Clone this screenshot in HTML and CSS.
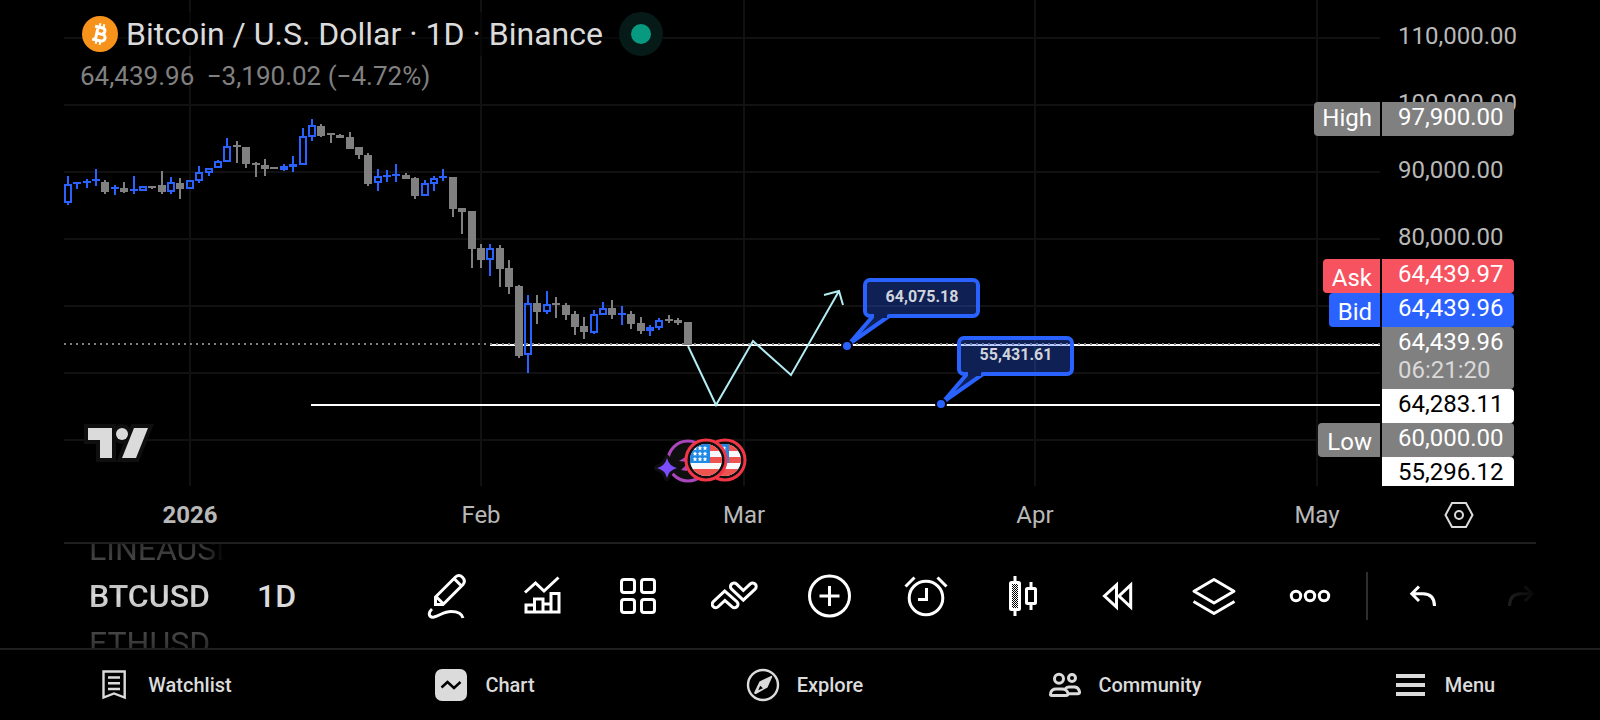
FILE: index.html
```html
<!DOCTYPE html>
<html lang="en">
  <head>
    <meta charset="utf-8">
    <meta name="viewport" content="width=device-width, initial-scale=1">
    <title>BTCUSD Chart</title>
    <link rel="stylesheet" href="styles.css">
  </head>
  <body>
    <main>
      <section class="chart">
        <div class="plot">
          <svg class="canvas" viewBox="64 0 1316 486" preserveAspectRatio="xMinYMin slice">
            <path class="grid" d="M64 38H1380M64 105H1380M64 172H1380M64 239H1380M64 306H1380M64 373H1380M64 440H1380M190 0V486M481 0V486M744 0V486M1035 0V486M1317 0V486"/>
            <path class="level" d="M490 345H1380M311 405H1380"/>
            <g id="candles"></g>
            <path class="last-price" d="M64 344H1380"/>

            <path class="projection" d="M688 346L716 405L753 341L791 375L839 291M824 295L839 291L843 305"/>

            <!-- price notes -->
            <g class="note">
              <path d="M870 280H973A5 5 0 0 1 978 285V311A5 5 0 0 1 973 316H889L849 344L873 316H870A5 5 0 0 1 865 311V285A5 5 0 0 1 870 280Z"/>
              <path class="note-edge" d="M874 316H887"/>
              <circle cx="847" cy="346" r="5"/>
              <text x="922" y="302">64,075.18</text>
            </g>
            <g class="note">
              <path d="M964 338H1067A5 5 0 0 1 1072 343V369A5 5 0 0 1 1067 374H983L943 402L967 374H964A5 5 0 0 1 959 369V343A5 5 0 0 1 964 338Z"/>
              <path class="note-edge" d="M968 374H981"/>
              <circle cx="941" cy="404" r="5"/>
              <text x="1016" y="360">55,431.61</text>
            </g>

            <!-- TradingView mark -->
            <g class="mark">
              <path d="M88 428H112V458H100V440H88ZM134 428H148L136 458H122Z"/>
              <circle cx="122" cy="434" r="6"/>
            </g>
            <g class="mark-fill">
              <path d="M88 428H112V458H100V440H88ZM134 428H148L136 458H122Z"/>
              <circle cx="122" cy="434" r="6"/>
            </g>

            <!-- events -->
            <defs>
              <clipPath id="flag-clip"><circle r="16"/></clipPath>
              <g id="flag">
                <circle r="20" fill="#0f0f0f" stroke="#f23645" stroke-width="3"/>
                <g clip-path="url(#flag-clip)">
                  <path fill="#f8f9fd" d="M-16-16H16V16H-16Z"/>
                  <path fill="#ef5350" d="M-16-16H16V-9H-16ZM-16-3H16V3H-16ZM-16 9H16V16H-16Z"/>
                  <path fill="#1e88e5" d="M-16-16H4V3H-16Z"/>
                  <path class="stars" d="M-11-14.200l.7 1.500 1.600.2-1.200 1.100.3 1.600-1.400-.8-1.400.8.3-1.600-1.200-1.100 1.600-.2zM-6-14.200l.7 1.500 1.600.2-1.200 1.100.3 1.600-1.400-.8-1.400.8.3-1.600-1.200-1.100 1.600-.2zM-1-14.200l.7 1.500 1.600.2-1.200 1.100.3 1.600-1.400-.8-1.400.8.3-1.600-1.200-1.100 1.600-.2zM-11-8.700l.7 1.500 1.600.2-1.200 1.100.3 1.600-1.400-.8-1.400.8.3-1.600-1.200-1.100 1.600-.2zM-6-8.700l.7 1.500 1.600.2-1.200 1.100.3 1.600-1.400-.8-1.400.8.3-1.600-1.200-1.100 1.600-.2zM-1-8.700l.7 1.500 1.600.2-1.200 1.100.3 1.600-1.400-.8-1.400.8.3-1.600-1.200-1.100 1.600-.2zM-11-3.200l.7 1.500 1.600.2-1.200 1.100.3 1.600-1.400-.8-1.400.8.3-1.600-1.200-1.100 1.600-.2zM-6-3.200l.7 1.500 1.600.2-1.200 1.100.3 1.600-1.400-.8-1.400.8.3-1.600-1.200-1.100 1.600-.2zM-1-3.200l.7 1.500 1.600.2-1.200 1.100.3 1.600-1.400-.8-1.400.8.3-1.600-1.200-1.100 1.600-.2z"/>
                </g>
              </g>
            </defs>
            <circle cx="688" cy="461" r="20" fill="#0f0f0f" stroke="#ab47bc" stroke-width="3"/>
            <path fill="#ab47bc" d="M679 461L687 456V462ZM681 470L687 464V471Z"/>
            <path fill="#7c4dff" stroke="#0f0f0f" stroke-width="6" paint-order="stroke" stroke-linejoin="round" d="M667 458Q669 466 677 468Q669 470 667 478Q665 470 657 468Q665 466 667 458Z"/>
            <use href="#flag" x="725" y="460"/>
            <use href="#flag" x="706" y="460"/>
          </svg>

          <header class="legend">
            <h1>
              <svg class="coin" viewBox="0 0 36 36">
                <circle cx="18" cy="18" r="18" fill="#f7931a"/>
                <g fill="none" stroke="#fff" stroke-width="3" transform="rotate(13 18 18)">
                  <path d="M11.500 11.500H19.500A3.200 3.200 0 0 1 19.500 17.800H15M19.500 17.800H20.500A3.400 3.400 0 0 1 20.500 24.600H11.500M14.700 11.500V24.500"/>
                  <path stroke-width="2" d="M16 7.500V11M20 7.500V11M16 25V28.500M20 25V28.500"/>
                </g>
              </svg>
              Bitcoin / U.S. Dollar · 1D · Binance
              <span class="status"></span>
            </h1>
            <p><span>64,439.96</span> <span>−3,190.02 (−4.72%)</span></p>
          </header>
        </div>

        <aside class="price-axis">
          <ul class="ticks">
            <li>110,000.00</li>
            <li>100,000.00</li>
            <li>90,000.00</li>
            <li>80,000.00</li>
          </ul>
          <div class="tags">
            <div class="tag tag-high"><span class="name">High</span><span class="value">97,900.00</span></div>
            <div class="tag tag-ask"><span class="name">Ask</span><span class="value">64,439.97</span></div>
            <div class="tag tag-bid"><span class="name">Bid</span><span class="value">64,439.96</span></div>
            <div class="tag"><span class="value">64,439.96<time>06:21:20</time></span></div>
            <div class="tag tag-line"><span class="value">64,283.11</span></div>
            <div class="tag"><span class="name">Low</span><span class="value">60,000.00</span></div>
            <div class="tag tag-line"><span class="value">55,296.12</span></div>
          </div>
        </aside>

        <div class="time-axis">
          <strong>2026</strong>
          <span>Feb</span>
          <span>Mar</span>
          <span>Apr</span>
          <span>May</span>
        </div>
        <button class="axis-settings" aria-label="Axis settings">
          <svg viewBox="0 0 32 32"><path d="M9 4H23L29.500 16L23 28H9L2.500 16Z"/><circle cx="16" cy="16" r="4"/></svg>
        </button>
      </section>

      <section class="toolbar">
        <div class="picker">
          <ul class="wheel">
            <li>LINEAUSD</li>
            <li class="current">BTCUSD</li>
            <li>ETHUSD</li>
          </ul>
          <button class="interval">1D</button>
        </div>
        <div class="tools">
          <button aria-label="Draw">
            <svg viewBox="0 0 48 48"><path d="M12.500 32.500V25L32.500 5Q36 1.800 39.500 5.300Q43 9 40 12.500L20 32.500ZM13 24.500L20.500 32M31 6.500L38.500 14M9 37C4.500 41 6 46 11 45C17 43.500 21 39.500 28 39.500C36 39.500 39 42 40 46"/></svg>
          </button>
          <button aria-label="Indicators">
            <svg viewBox="0 0 48 48"><path d="M6 20.500L16.500 11L25 19L39.500 5.500M7 40V33H15.500V27H24V32H32V21.500H40V40ZM15.500 33V40M24 32V40M32 32V40"/></svg>
          </button>
          <button aria-label="Layouts">
            <svg viewBox="0 0 48 48"><rect x="6.500" y="7.500" width="13" height="13" rx="2.500"/><rect x="26.500" y="7.500" width="13" height="13" rx="2.500"/><rect x="6.500" y="27.500" width="13" height="13" rx="2.500"/><rect x="26.500" y="27.500" width="13" height="13" rx="2.500"/></svg>
          </button>
          <button aria-label="Patterns">
            <svg viewBox="0 0 48 48" stroke-linecap="round">
              <path class="band" d="M4.700 32.200L13.800 23.800L23.500 32.200"/><path class="band-inner" d="M4.700 32.200L13.800 23.800L23.500 32.200"/>
              <path class="band" d="M23 14.500L32.300 23.300L41.700 14.500"/><path class="band-inner" d="M23 14.500L32.300 23.300L41.700 14.500"/>
            </svg>
          </button>
          <button aria-label="Add">
            <svg viewBox="0 0 48 48"><circle cx="22.500" cy="24" r="20"/><path d="M22.500 14V34M12.500 24H32.500"/></svg>
          </button>
          <button aria-label="Alerts">
            <svg viewBox="0 0 48 48"><circle cx="23" cy="26" r="16.800"/><path d="M2.500 14.500L11.500 5.500M34.500 5.500L43.500 14.500M23.500 16V27.500H15"/></svg>
          </button>
          <button aria-label="Chart type">
            <svg viewBox="0 0 48 48">
              <defs>
                <pattern id="checker" width="2" height="2" patternUnits="userSpaceOnUse"><path class="dot" d="M0 0H1V1H0ZM1 1H2V2H1Z"/></pattern>
              </defs>
              <rect x="11.500" y="10.500" width="9" height="27" rx="1" fill="url(#checker)"/><rect x="27.500" y="16.500" width="9" height="15" rx="1"/>
              <path d="M16 4V10M16 38V44M32 10V16M32 32V38"/>
            </svg>
          </button>
          <button aria-label="Replay">
            <svg viewBox="0 0 48 48"><path d="M21.500 13V35L9.500 24ZM35.700 13V35L24 24Z"/></svg>
          </button>
          <button aria-label="Objects">
            <svg viewBox="0 0 48 48" stroke-linejoin="round"><path d="M23 7.500L43 19.300L23 31L3 19.300ZM2.500 29.500L23 41.500L43.500 29.500"/></svg>
          </button>
          <button aria-label="More">
            <svg viewBox="0 0 48 48"><circle cx="9" cy="24" r="4.700"/><circle cx="23" cy="24" r="4.700"/><circle cx="37" cy="24" r="4.700"/></svg>
          </button>
          <span class="divider"></span>
          <button aria-label="Undo">
            <svg viewBox="0 0 48 48"><path d="M20 14.500L12.800 21.700L20 29M13 21.700H24Q35.500 22 35.500 34"/></svg>
          </button>
          <button class="redo" aria-label="Redo" disabled>
            <svg viewBox="0 0 48 48"><path d="M30 14.500L37.200 21.700L30 29M37 21.700H26Q14.500 22 14.500 34"/></svg>
          </button>
        </div>
      </section>
    </main>

    <nav>
      <a href="#watchlist">
        <svg viewBox="0 0 32 32"><path d="M5.500 2.500H26.700V28.500L16 24.500L5.500 28.500ZM10 8.500H22M10 14.300H22M10 20H22"/></svg>
        Watchlist
      </a>
      <a href="#chart">
        <svg viewBox="0 0 32 32"><rect class="solid" width="32" height="32" rx="7"/><path class="zigzag" d="M6.500 18.500L12.500 13L19 19L25.500 13"/></svg>
        Chart
      </a>
      <a href="#explore">
        <svg viewBox="0 0 32 32"><circle cx="16" cy="16" r="15"/><path class="solid" d="M24.500 6.800Q25.500 7 25.200 8L20.500 18.500L9 25Q7 25.500 7.200 23.500L12.500 12.500Z"/><path class="hole" d="M13.200 16.800L16 19.200L11.200 21.200Z"/></svg>
        Explore
      </a>
      <a href="#community">
        <svg class="people" viewBox="0 0 32 32"><circle cx="11" cy="9.700" r="4.500"/><circle cx="24" cy="9" r="3.500"/><path d="M4 26.500Q2 26.500 2.500 24.500Q3.500 20 8 20H14Q19 20 20 24.500Q20.300 26.500 18 26.500ZM19.500 24.700H29.500Q32 24.700 31.500 22.500Q30.500 18.500 27 18H21Q19 18 17.500 19.500"/></svg>
        Community
      </a>
      <a href="#menu">
        <svg viewBox="0 0 32 32"><path class="solid" d="M1 5H30V9H1ZM1 14H30V18H1ZM1 23H30V27H1Z"/></svg>
        Menu
      </a>
    </nav>

    <script src="chart.js"></script>
  </body>
</html>
```
FILE: styles.css
```css
* {
  box-sizing: border-box;
}

body {
  margin: 0;
  min-height: 100vh;
  background: #000;
  color: #dbdbdb;
  font-family: Roboto, 'Liberation Sans', sans-serif;
  font-size: 24px;
}

ul {
  list-style: none;
  margin: 0;
  padding: 0;
}

button {
  padding: 0;
  border: 0;
  background: none;
  color: inherit;
  font: inherit;
}

main {
  margin: 0 64px;
}

/* chart area */
.chart {
  display: grid;
  grid-template-columns: 1fr 156px;
  grid-template-rows: 486px 56px;
}
.plot {
  position: relative;
  min-width: 0;
  overflow: hidden;
}
.canvas {
  display: block;
  width: 100%;
  height: 100%;
}
.canvas .grid {
  stroke: #111;
  stroke-width: 2;
}
.canvas .level {
  stroke: #fff;
  stroke-width: 2;
}
.canvas .last-price {
  stroke: #808080;
  stroke-width: 2;
  stroke-dasharray: 2 4;
}
.canvas .up {
  fill: #2962ff;
  fill-rule: evenodd;
}
.canvas .down {
  fill: #808080;
}
.projection {
  fill: none;
  stroke: #b2ebf2;
  stroke-width: 2;
}
.note path {
  fill: #2962ff;
  fill-opacity: .33;
  stroke: #2962ff;
  stroke-width: 4;
}
.note .note-edge {
  stroke: #0d1f54;
}
.note circle {
  fill: #2962ff;
  stroke: #000;
  stroke-width: 2;
}
.note text {
  fill: #d1d4dc;
  font-size: 16px;
  font-weight: 700;
  text-anchor: middle;
}
.mark {
  fill: #0f0f0f;
  stroke: #0f0f0f;
  stroke-width: 8;
}
.mark-fill {
  fill: #dbdbdb;
}
.stars {
  fill: #fff;
}

.legend {
  position: absolute;
  top: 12px;
  left: 16px;
}
.legend h1 {
  display: flex;
  align-items: center;
  margin: 0 0 0 2px;
  height: 44px;
  gap: 8px;
  font-size: 32px;
  font-weight: 400;
  background: rgba(0, 0, 0, .5);
}
.coin {
  width: 36px;
  height: 36px;
}
.status {
  width: 44px;
  height: 44px;
  margin-left: 8px;
  border: 12px solid #061b17;
  border-radius: 50%;
  background: #089981;
}
.legend p {
  margin: 4px 0 0;
  line-height: 32px;
  font-size: 26px;
  color: #808080;
}
.legend p span + span {
  margin-left: 6px;
}

/* price axis */
.price-axis {
  position: relative;
  color: #b8b8b8;
}
.ticks {
  padding: 3px 0 0 18px;
  line-height: 67px;
}
.tags {
  position: absolute;
  top: 0;
  right: 22px;
  height: 486px;
  overflow: hidden;
  display: flex;
  flex-direction: column;
  align-items: flex-end;
  color: #fff;
}
.tag {
  flex: none;
  display: flex;
  gap: 2px;
}
.tag .name {
  padding: 5px 8px 1px 9px;
  line-height: 28px;
  border-radius: 4px 0 0 4px;
  background: #808080;
}
.tag .value {
  width: 132px;
  padding: 1px 0 5px 16px;
  line-height: 28px;
  border-radius: 0 4px 4px 0;
  background: #808080;
}
.tag time {
  display: block;
  color: #d9d9d9;
}
.tag-high {
  margin: 102px 0 123px;
}
.tag-high .name {
  padding: 2px 8px 4px;
}
.tag-ask .name,
.tag-ask .value {
  background: #f7525f;
}
.tag-bid .name,
.tag-bid .value {
  background: #2962ff;
}
.tag-line .value {
  background: #fff;
  color: #000;
}

.time-axis {
  display: grid;
  grid-template-columns: 200fr 382fr 144fr 438fr 126fr;
  padding-left: 26px;
  line-height: 58px;
  text-align: center;
  color: #b8b8b8;
}
.axis-settings {
  display: flex;
  align-items: center;
  justify-content: center;
  padding: 2px 0 0 2px;
}
.axis-settings svg {
  width: 32px;
  height: 32px;
  fill: none;
  stroke: #dbdbdb;
  stroke-width: 2;
}

/* toolbar */
.toolbar {
  display: flex;
  height: 106px;
  border-top: 2px solid #1f1f1f;
}
.picker {
  flex: none;
  display: flex;
  align-items: center;
  width: 335px;
  height: 104px;
  padding-left: 25px;
  font-size: 32px;
  font-weight: 500;
  overflow: hidden;
}
.wheel {
  width: 135px;
  margin-right: 33px;
  line-height: 47px;
  font-weight: 400;
  color: #6e6e6e;
  -webkit-mask-image: linear-gradient(#0004, #000 50%, #0004);
  mask-image: linear-gradient(#0004, #000 50%, #0004);
}
.wheel li {
  overflow: hidden;
  -webkit-mask-image: linear-gradient(to right, #000 85%, transparent);
  mask-image: linear-gradient(to right, #000 85%, transparent);
}
.wheel .current {
  font-weight: 500;
  color: #dbdbdb;
  -webkit-mask-image: none;
  mask-image: none;
}
.interval {
  line-height: 47px;
}
.tools {
  flex: 1;
  display: flex;
  align-items: center;
  min-width: 0;
  overflow: hidden;
}
.tools button {
  flex: none;
  width: 96px;
  height: 96px;
}
.tools svg {
  display: block;
  width: 48px;
  height: 48px;
  margin: 0 auto;
  fill: none;
  stroke: #fff;
  stroke-width: 3;
}
.tools .band {
  stroke-width: 10;
}
.tools .band-inner {
  stroke: #000;
  stroke-width: 4;
}
.tools .dot {
  fill: #fff;
  stroke: none;
}
.divider {
  flex: none;
  width: 2px;
  height: 48px;
  margin: 0 7px;
  background: #2e2e2e;
}
.tools .redo {
  -webkit-mask-image: linear-gradient(to right, #000 30%, transparent 75%);
  mask-image: linear-gradient(to right, #000 30%, transparent 75%);
}
.tools .redo svg {
  stroke: #262626;
}

/* bottom navigation */
nav {
  display: grid;
  grid-template-columns: repeat(5, 1fr);
  height: 72px;
  border-top: 2px solid #1f1f1f;
}
nav a {
  display: flex;
  align-items: center;
  justify-content: center;
  gap: 18px;
  padding-left: 10px;
  color: #dbdbdb;
  font-size: 20px;
  font-weight: 500;
  text-decoration: none;
}
nav svg {
  width: 32px;
  height: 32px;
  fill: none;
  stroke: #dbdbdb;
  stroke-width: 2.4;
  overflow: visible;
}
nav .people {
  stroke-width: 3;
}
nav .solid {
  fill: #dbdbdb;
  stroke: none;
}
nav .zigzag {
  stroke: #000;
}
nav .hole {
  fill: #000;
  stroke: none;
}
```
FILE: chart.js
```js
// x, wick top, body top, body bottom, wick bottom, up
const candles = [
  [68, 176, 184, 203, 205, 1], [77, 182, 182, 184, 189, 1], [87, 179, 181, 183, 188, 1],
  [96, 169, 179, 181, 186, 1], [105, 180, 182, 192, 194, 0], [115, 185, 187, 189, 195, 1],
  [124, 182, 188, 192, 193, 0], [134, 176, 189, 191, 194, 1], [143, 186, 186, 191, 191, 1],
  [152, 186, 186, 188, 189, 0], [162, 171, 185, 192, 194, 0], [171, 177, 182, 192, 194, 1],
  [180, 178, 183, 189, 199, 0], [190, 180, 180, 189, 189, 1], [199, 166, 172, 181, 183, 1],
  [209, 168, 168, 173, 176, 1], [218, 160, 161, 168, 168, 1], [227, 138, 146, 162, 162, 1],
  [237, 141, 145, 147, 163, 0], [246, 147, 147, 164, 168, 0], [256, 162, 163, 165, 177, 0],
  [265, 159, 165, 169, 176, 0], [274, 167, 167, 169, 169, 0], [284, 164, 166, 170, 171, 1],
  [293, 156, 164, 167, 172, 1], [303, 128, 136, 165, 165, 1], [312, 119, 125, 137, 141, 1],
  [321, 124, 126, 136, 137, 0], [331, 133, 133, 135, 143, 0], [340, 134, 135, 138, 138, 0],
  [350, 132, 137, 149, 149, 0], [359, 147, 147, 155, 159, 0], [368, 153, 155, 184, 186, 0],
  [378, 169, 176, 183, 191, 1], [387, 170, 175, 177, 182, 1], [396, 164, 174, 176, 182, 1],
  [406, 173, 175, 179, 179, 0], [415, 177, 178, 196, 199, 0], [425, 180, 183, 196, 196, 1],
  [434, 176, 178, 184, 191, 1], [443, 169, 176, 178, 181, 1], [453, 177, 177, 209, 217, 0],
  [462, 208, 208, 212, 234, 0], [472, 211, 211, 249, 268, 0], [481, 244, 248, 260, 268, 0],
  [490, 244, 248, 260, 276, 1], [500, 245, 248, 269, 287, 0], [509, 260, 268, 287, 294, 0],
  [519, 285, 286, 356, 358, 0], [528, 295, 303, 355, 373, 1], [537, 295, 303, 312, 324, 0],
  [547, 291, 304, 312, 314, 1], [556, 297, 303, 305, 318, 0], [566, 303, 305, 315, 320, 0],
  [575, 311, 314, 327, 335, 0], [584, 317, 326, 332, 339, 0], [594, 310, 314, 333, 334, 1],
  [603, 302, 308, 315, 315, 1], [612, 300, 308, 315, 319, 0], [622, 306, 313, 315, 325, 1],
  [631, 311, 314, 324, 329, 0], [641, 317, 323, 331, 334, 0], [650, 325, 327, 331, 336, 1],
  [659, 318, 320, 328, 330, 1], [669, 315, 319, 321, 323, 0], [678, 318, 320, 323, 325, 0],
  [688, 322, 322, 345, 345, 0],
];

const layer = document.getElementById('candles');

candles.forEach(([x, high, top, bottom, low, up]) => {
  let d = `M${x - 1} ${high}h2V${top}h-2zM${x - 1} ${bottom}h2V${low}h-2z`;
  d += `M${x - 4} ${top}h8V${bottom}h-8z`;
  // rising candles are hollow
  if (up && bottom - top > 4) d += `M${x - 2} ${top + 2}h4V${bottom - 2}h-4z`;

  const path = document.createElementNS('http://www.w3.org/2000/svg', 'path');
  path.setAttribute('class', up ? 'up' : 'down');
  path.setAttribute('d', d);
  layer.appendChild(path);
});
```
